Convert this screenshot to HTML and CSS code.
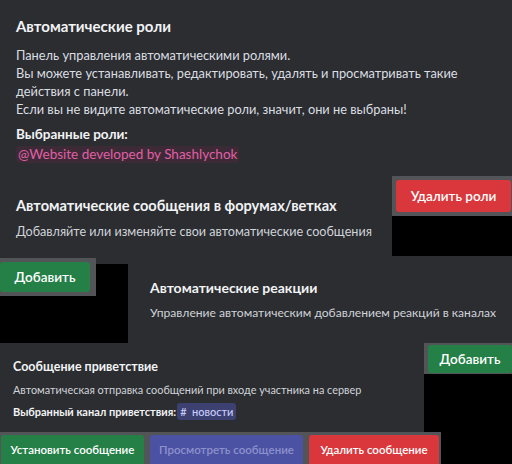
FILE: index.html
```html
<!DOCTYPE html>
<html lang="ru">
<head>
<meta charset="utf-8">
<link rel="stylesheet" href="styles.css">
</head>
<body>
<div class="canvas">
  <section class="panel p1">
    <h2 class="title">Автоматические роли</h2>
    <p class="body">Панель управления автоматическими ролями.<br>Вы можете устанавливать, редактировать, удалять и просматривать такие действия с панели.<br>Если вы не видите автоматические роли, значит, они не выбраны!</p>
    <h3 class="label">Выбранные роли:</h3>
    <span class="role">@Website developed by Shashlychok</span>
  </section>

  <div class="row r2">
    <section class="panel p2">
      <h2 class="title">Автоматические сообщения в форумах/ветках</h2>
      <p class="desc">Добавляйте или изменяйте свои автоматические сообщения</p>
    </section>
    <div class="side s2">
      <div class="band band-red"><button class="btn red">Удалить роли</button></div>
      <div class="void v2"></div>
      <div class="fill f2"></div>
    </div>
  </div>

  <div class="row r3">
    <div class="col c3">
      <div class="c3-top">
        <div class="band band-add"><button class="btn green">Добавить</button></div>
        <div class="c3-gap"><div class="fill f3"></div><div class="void"></div></div>
      </div>
      <div class="void v3"></div>
    </div>
    <section class="panel p3">
      <h2 class="title">Автоматические реакции</h2>
      <p class="desc">Управление автоматическим добавлением реакций в каналах</p>
    </section>
  </div>

  <div class="row r4">
    <section class="panel p4">
      <h2 class="title small">Сообщение приветствие</h2>
      <p class="desc small">Автоматическая отправка сообщений при входе участника на сервер</p>
      <p class="chan-line"><b>Выбранный канал приветствия:</b><span class="channel"># &nbsp;новости</span></p>
    </section>
    <div class="side s4">
      <div class="band band-add2"><button class="btn green">Добавить</button></div>
      <div class="void"></div>
    </div>
  </div>

  <div class="row r5">
    <div class="band band-bottom">
      <button class="btn green b1">Установить сообщение</button>
      <button class="btn blurple b2">Просмотреть сообщение</button>
      <button class="btn red b3">Удалить сообщение</button>
    </div>
    <div class="void"></div>
  </div>
</div>
</body>
</html>
```

FILE: styles.css
```css
* { box-sizing: border-box; margin: 0; padding: 0; }
html, body { background: #000; }
body {
  width: 512px;
  height: 464px;
  overflow: hidden;
  font-family: Lato, "Liberation Sans", sans-serif;
  color: #dbdee1;
}
.canvas { display: flex; flex-direction: column; width: 512px; height: 464px; }
.panel { background: #2b2d31; }
.row { display: flex; }
.void { background: #000; flex: 1; }
.fill { background: #2b2d31; }
.band { background: #535457; display: flex; }

.title { color: #f2f3f5; font-weight: 700; font-size: 15px; line-height: 20px; white-space: nowrap; }
.body { font-size: 12.8px; line-height: 18px; }
.desc { font-size: 12.6px; line-height: 18px; color: #d0d3d8; white-space: nowrap; }

/* panel 1 */
.p1 { height: 176px; padding: 16px 16px 0 16px; }
.p1 .title { margin-bottom: 10px; }
.label { color: #f2f3f5; font-weight: 700; font-size: 13.5px; line-height: 18px; margin-top: 7px; }
.role {
  display: inline-block;
  margin-top: -1px;
  padding: 0 2px;
  font-size: 13.5px;
  line-height: 17px;
  color: #e060a6;
  background: #3d2a37;
  border-radius: 3px;
}

/* row 2 */
.r2 { height: 82px; }
.p2 { width: 392px; flex: none; padding: 20px 16px 0 16px; }
.p2 .title { font-size: 14.6px; margin-bottom: 7px; }
.s2 { width: 120px; flex: none; display: flex; flex-direction: column; }
.band-red { height: 40px; padding: 4px 1px 4px 4px; }
.v2 { flex: none; height: 40px; margin-right: 6px; }
.f2 { flex: 1; }

/* buttons */
.btn {
  border: 0;
  border-radius: 3px;
  color: #fff;
  font-family: inherit;
  font-weight: 600;
  font-size: 13.5px;
  width: 100%;
  height: 100%;
}
.red { background: #da373c; }
.green { background: #248046; }
.blurple { background: #4c52a3; color: #8c91cc; }

/* row 3 */
.r3 { height: 85px; }
.c3 { width: 128px; flex: none; display: flex; flex-direction: column; }
.c3-top { display: flex; height: 38px; }
.band-add { width: 96px; flex: none; padding: 4px 6px 4px 0; }
.c3-gap { flex: 1; display: flex; flex-direction: column; }
.f3 { height: 6px; }
.v3 { flex: 1; }
.p3 { flex: 1; min-width: 0; padding: 20px 4px 0 22px; }
.p3 .title { font-size: 14px; margin-bottom: 6px; }
.p3 .desc { font-size: 12.1px; }

/* row 4 */
.r4 { height: 89px; }
.p4 { width: 424px; flex: none; padding: 15px 13px 0 13px; }
.title.small { font-size: 12.5px; line-height: 18px; margin-bottom: 6px; }
.desc.small { font-size: 10.9px; line-height: 16px; margin-bottom: 5px; }
.chan-line { font-size: 11px; line-height: 17px; color: #f2f3f5; white-space: nowrap; }
.chan-line b { font-weight: 700; }
.channel {
  display: inline-block;
  margin-left: 1px;
  padding: 0 3px;
  color: #c9cdfb;
  background: #3c4172;
  border-radius: 3px;
  font-weight: 500;
}
.s4 { flex: 1; display: flex; flex-direction: column; }
.band-add2 { height: 31px; padding: 2px 0 1px 4px; }

/* row 5 */
.r5 { height: 32px; }
.band-bottom { width: 441px; flex: none; padding: 3px 2px 0 1px; gap: 6px; }
.band-bottom .btn { font-size: 11.5px; border-radius: 3px 3px 0 0; }
.b1 { width: 143px; }
.b2 { width: 153px; }
.b3 { width: 130px; }
```
